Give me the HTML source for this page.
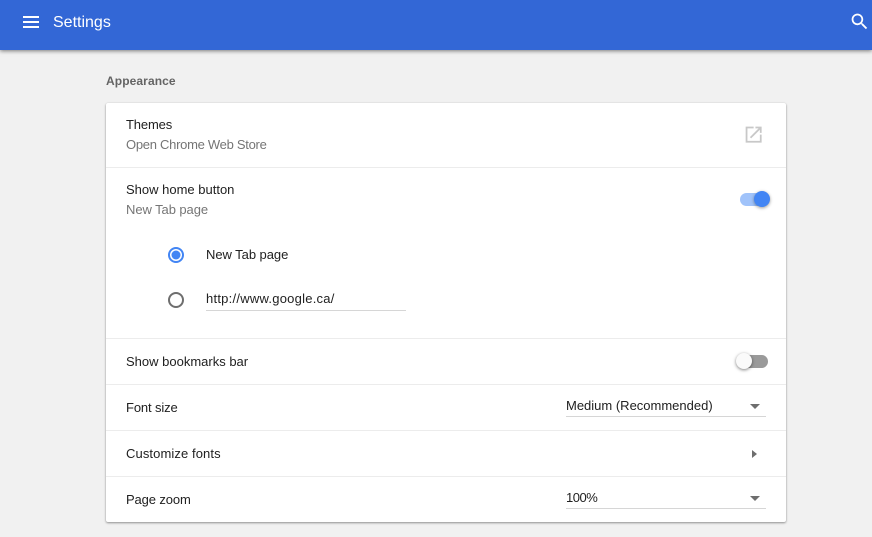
<!DOCTYPE html>
<html><head><meta charset="utf-8"><style>
html,body{margin:0;padding:0;width:872px;height:537px;overflow:hidden;background:#f1f1f1;font-family:"Liberation Sans",sans-serif}
#h{position:absolute;left:0;top:0;width:872px;height:50px;background:#3367d6;box-shadow:0 1px 4px rgba(0,0,0,.5)}
#c{position:absolute;left:106px;top:103px;width:680px;height:419px;background:#fff;border-radius:2px;box-shadow:0 1px 2px rgba(0,0,0,.4),0 0 1px rgba(0,0,0,.12)}
.t{position:absolute;font-size:13px;line-height:16px;white-space:nowrap;color:#212121}
.g{color:#757575}
.d{position:absolute;height:1px;background:#ececec}
.u{position:absolute;height:1px;background:#d6d6d6}
svg{position:absolute;overflow:visible}
</style></head><body>
<div id="h"></div>
<svg style="left:23px;top:16px" width="16" height="12"><path d="M0 1H16M0 6H16M0 11H16" stroke="#fff" stroke-width="2"/></svg>
<div class="t" style="left:53px;top:15px;font-size:16px;color:#fff">Settings</div>
<svg style="left:849.3px;top:11.3px" width="21.3" height="21.3" viewBox="0 0 24 24"><path fill="#fff" d="M15.5 14h-.79l-.28-.27C15.41 12.59 16 11.11 16 9.5 16 5.91 13.09 3 9.5 3S3 5.91 3 9.5 5.91 16 9.5 16c1.61 0 3.09-.59 4.23-1.57l.27.28v.79l5 4.99L20.49 19l-4.99-5zm-6 0C7.01 14 5 11.99 5 9.5S7.01 5 9.5 5 14 7.01 14 9.5 11.99 14 9.5 14z"/></svg>
<div class="t" style="left:106px;top:73px;font-weight:bold;font-size:12px;color:#646464;letter-spacing:.1px">Appearance</div>
<div id="c"></div>
<div class="d" style="left:106px;top:167px;width:680px"></div>
<div class="d" style="left:106px;top:338px;width:680px"></div>
<div class="d" style="left:106px;top:384px;width:680px"></div>
<div class="d" style="left:106px;top:430px;width:680px"></div>
<div class="d" style="left:106px;top:476px;width:680px"></div>
<div class="t" style="left:126px;top:117px;letter-spacing:-.15px">Themes</div>
<div class="t g" style="left:126px;top:137px;letter-spacing:-.28px">Open Chrome Web Store</div>
<svg style="left:743.3px;top:124.3px" width="21.3" height="21.3" viewBox="0 0 24 24"><path fill="#c8c8c8" d="M19 19H5V5h7V3H3v18h18v-9h-2v7zM14 3v2h3.59l-9.83 9.83 1.41 1.41L19 6.41V10h2V3h-7z"/></svg>
<div class="t" style="left:126px;top:182px">Show home button</div>
<div class="t g" style="left:126px;top:202px;letter-spacing:-.07px">New Tab page</div>
<div style="position:absolute;left:740px;top:193px;width:28px;height:13px;border-radius:7px;background:#a0c3fa"></div>
<div style="position:absolute;left:754px;top:191px;width:16px;height:16px;border-radius:50%;background:#4285f4;box-shadow:0 1px 3px rgba(0,0,0,.4)"></div>
<svg style="left:168px;top:247px" width="16" height="16"><circle cx="8" cy="8" r="7" fill="none" stroke="#4285f4" stroke-width="2"/><circle cx="8" cy="8" r="4.5" fill="#4285f4"/></svg>
<div class="t" style="left:206px;top:247px;letter-spacing:-.05px">New Tab page</div>
<svg style="left:168px;top:292px" width="16" height="16"><circle cx="8" cy="8" r="7" fill="none" stroke="#6e6e6e" stroke-width="2"/></svg>
<div class="t" style="left:206px;top:291px;letter-spacing:.24px">http://www.google.ca/</div>
<div class="u" style="left:206px;top:310px;width:200px"></div>
<div class="t" style="left:126px;top:354px">Show bookmarks bar</div>
<div style="position:absolute;left:738px;top:355px;width:30px;height:13px;border-radius:7px;background:#9a9a9a"></div>
<div style="position:absolute;left:736px;top:353px;width:16px;height:16px;border-radius:50%;background:#fafafa;box-shadow:0 1px 3px rgba(0,0,0,.5)"></div>
<div class="t" style="left:126px;top:400px;letter-spacing:-.12px">Font size</div>
<div class="t" style="left:566px;top:398px">Medium (Recommended)</div>
<div class="u" style="left:566px;top:416px;width:200px"></div>
<svg style="left:750px;top:404px" width="10" height="5"><path d="M0 0H10L5 5Z" fill="#6e6e6e"/></svg>
<div class="t" style="left:126px;top:446px;letter-spacing:.1px">Customize fonts</div>
<svg style="left:752px;top:450px" width="5" height="8"><path d="M0 0L5 4L0 8Z" fill="#6e6e6e"/></svg>
<div class="t" style="left:126px;top:492px;letter-spacing:-.12px">Page zoom</div>
<div class="t" style="left:566px;top:490px;letter-spacing:-.5px">100%</div>
<div class="u" style="left:566px;top:508px;width:200px"></div>
<svg style="left:750px;top:496px" width="10" height="5"><path d="M0 0H10L5 5Z" fill="#6e6e6e"/></svg>
</body></html>
